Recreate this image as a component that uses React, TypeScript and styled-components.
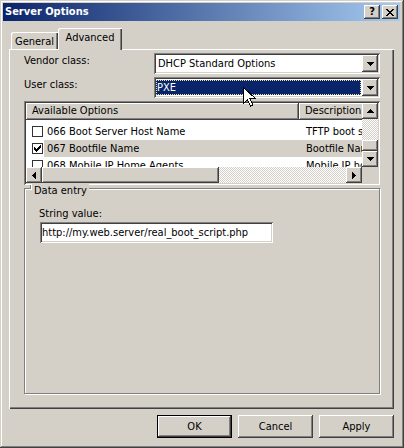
import React from 'react';
import styled, { createGlobalStyle, css } from 'styled-components';

const FACE = '#d4d0c8';
const SHADOW = '#808080';
const DARK = '#404040';
const NAVY = '#0a246a';

const GlobalStyle = createGlobalStyle`
    html, body {
        margin: 0;
        padding: 0;
        background: ${FACE};
    }
    body {
        font-family: 'DejaVu Sans Condensed', 'Liberation Sans', sans-serif;
        font-size: 11px;
        color: #000;
    }
    button, input {
        font: inherit;
    }
`;

// classic 3d bevels
const raised = css`
    background: ${FACE};
    box-shadow: inset -1px -1px ${DARK}, inset 1px 1px #fff, inset -2px -2px ${SHADOW}, inset 2px 2px ${FACE};
`;

const sunken = css`
    box-shadow: inset 1px 1px ${SHADOW}, inset -1px -1px #fff, inset 2px 2px ${DARK}, inset -2px -2px ${FACE};
`;

const dither = css`
    background: repeating-conic-gradient(#fff 0 25%, ${FACE} 0 50%) 0 0 / 2px 2px;
`;

const Window = styled.div`
    position: relative;
    width: 404px;
    height: 448px;
    box-sizing: border-box;
    padding: 3px 4px 3px 3px;
    background: ${FACE};
    box-shadow: inset -1px -1px ${DARK}, inset 1px 1px ${FACE}, inset -2px -2px ${SHADOW}, inset 2px 2px #fff;
    display: flex;
    flex-direction: column;
    overflow: hidden;
`;

const TitleBar = styled.div`
    height: 18px;
    display: flex;
    align-items: center;
    padding: 0 2px 0 2px;
    background: linear-gradient(to right, ${NAVY}, #a6caf0);
`;

const Title = styled.div`
    flex: 1;
    color: #fff;
    font-weight: bold;
    font-size: 11px;
    line-height: 14px;
    white-space: nowrap;
`;

const CaptionButton = styled.div`
    ${raised};
    width: 16px;
    height: 14px;
    margin-left: 2px;
    display: flex;
    align-items: center;
    justify-content: center;
    font-weight: bold;
    font-size: 11px;
    line-height: 12px;
    box-sizing: border-box;
`;

const Body = styled.div`
    flex: 1;
    display: flex;
    flex-direction: column;
    padding: 7px 6px 0 6px;
`;

const TabStrip = styled.div`
    height: 21px;
    display: flex;
    align-items: flex-end;
    padding-left: 2px;
`;

const Tab = styled.div<{ active?: boolean; w: number }>`
    position: relative;
    z-index: ${p => (p.active ? 1 : 0)};
    width: ${p => p.w}px;
    height: ${p => (p.active ? 22 : 17)}px;
    margin-bottom: ${p => (p.active ? -1 : 0)}px;
    box-sizing: border-box;
    background: ${FACE};
    border-top-left-radius: 2px;
    box-shadow: inset 1px 1px #fff, inset -1px 0 ${DARK}, inset -2px 0 ${SHADOW};
    display: flex;
    align-items: ${p => (p.active ? 'flex-start' : 'center')};
    justify-content: center;
    padding-top: ${p => (p.active ? 3 : 1)}px;
    line-height: 13px;
`;

const Panel = styled.div`
    height: 360px;
    box-sizing: border-box;
    padding: 4px 14px 0 15px;
    box-shadow: inset 1px 1px #fff, inset -1px -1px ${DARK}, inset -2px -2px ${SHADOW};
    display: flex;
    flex-direction: column;
`;

const FieldRow = styled.div<{ gap?: number }>`
    display: grid;
    grid-template-columns: 130px 226px;
    height: 21px;
    margin-top: ${p => p.gap ?? 0}px;
`;

const Label = styled.div`
    line-height: 13px;
    margin-top: 1px;
    white-space: nowrap;
`;

const Combo = styled.div`
    ${sunken};
    background: #fff;
    box-sizing: border-box;
    padding: 2px;
    display: flex;
`;

const ComboValue = styled.div<{ focused?: boolean }>`
    flex: 1;
    display: flex;
    align-items: center;
    padding-left: 2px;
    line-height: 13px;
    white-space: nowrap;
    ${p =>
        p.focused &&
        css`
            margin: 1px 1px 1px 0;
            padding-left: 1px;
            background: ${NAVY};
            color: #fff;
            outline: 1px dotted #e8e4a8;
            outline-offset: -1px;
        `}
`;

const ArrowButton = styled.div<{ h?: number }>`
    ${raised};
    width: 16px;
    height: ${p => p.h ?? 16}px;
    flex: none;
    display: flex;
    align-items: center;
    justify-content: center;
`;

const ListView = styled.div`
    ${sunken};
    margin-top: 3px;
    height: 84px;
    box-sizing: border-box;
    padding: 2px;
    background: #fff;
    display: grid;
    grid-template-columns: 1fr 16px;
    grid-template-rows: 1fr 16px;
`;

const ListPane = styled.div`
    overflow: hidden;
    min-width: 0;
`;

const HeaderRow = styled.div`
    display: grid;
    grid-template-columns: 273px 90px;
    height: 17px;
`;

const HeaderCell = styled.div`
    ${raised};
    padding-left: 6px;
    line-height: 16px;
    white-space: nowrap;
`;

const Rows = styled.div`
    padding-top: 3px;
`;

const Row = styled.div`
    display: grid;
    grid-template-columns: 273px 90px;
    height: 17px;
`;

const OptionCell = styled.div`
    display: flex;
    align-items: center;
    padding-left: 6px;
`;

const CheckBox = styled.div`
    width: 11px;
    height: 11px;
    box-sizing: border-box;
    border: 1px solid #333;
    background: #fff;
    flex: none;
    display: flex;
    align-items: center;
    justify-content: center;
`;

const OptionText = styled.div<{ selected?: boolean }>`
    flex: 1;
    align-self: stretch;
    margin-left: 1px;
    padding-left: 3px;
    display: flex;
    align-items: center;
    white-space: nowrap;
    background: ${p => (p.selected ? FACE : 'transparent')};
`;

const DescCell = styled.div<{ selected?: boolean }>`
    display: flex;
    align-items: center;
    padding-left: 7px;
    white-space: nowrap;
    background: ${p => (p.selected ? FACE : 'transparent')};
`;

const VScroll = styled.div`
    display: flex;
    flex-direction: column;
`;

const HScroll = styled.div`
    display: flex;
`;

const Track = styled.div`
    ${dither};
    flex: 1;
`;

const Thumb = styled.div<{ len: number; vertical?: boolean }>`
    ${raised};
    flex: none;
    ${p => (p.vertical ? `height: ${p.len}px;` : `width: ${p.len}px;`)}
`;

const Corner = styled.div`
    background: ${FACE};
`;

const GroupBox = styled.div`
    position: relative;
    margin-top: 3px;
    width: 356px;
    height: 206px;
    box-sizing: border-box;
    border: 1px solid ${SHADOW};
    box-shadow: inset 1px 1px #fff, 1px 1px #fff;
    padding: 17px 0 0 14px;
`;

const Legend = styled.div`
    position: absolute;
    top: -5px;
    left: 7px;
    padding: 0 2px 0 2px;
    background: ${FACE};
    line-height: 13px;
    white-space: nowrap;

    &::before {
        content: '';
        position: absolute;
        left: -2px;
        top: 1px;
        width: 1px;
        height: 4px;
        background: ${SHADOW};
        box-shadow: 1px 0 #fff;
    }
`;

const TextBox = styled.div`
    ${sunken};
    margin: 2px 0 0 1px;
    width: 233px;
    height: 21px;
    box-sizing: border-box;
    background: #fff;
    padding: 0 2px;
    display: flex;
    align-items: center;
    white-space: nowrap;
    overflow: hidden;
`;

const ButtonRow = styled.div`
    display: flex;
    justify-content: flex-end;
    gap: 6px;
    margin-top: 6px;
`;

const PushButton = styled.div<{ isDefault?: boolean }>`
    width: 75px;
    height: 23px;
    box-sizing: border-box;
    background: ${FACE};
    display: flex;
    align-items: center;
    justify-content: center;
    padding-bottom: 1px;
    box-shadow: ${p =>
        p.isDefault
            ? `inset 0 0 0 1px #000, inset -2px -2px ${DARK}, inset 2px 2px #fff, inset -3px -3px ${SHADOW}`
            : `inset -1px -1px ${DARK}, inset 1px 1px #fff, inset -2px -2px ${SHADOW}`};
`;

const Pointer = styled.svg`
    position: absolute;
    left: 243px;
    top: 87px;
`;

type Dir = 'up' | 'down' | 'left' | 'right';

const Triangle = ({ dir }: { dir: Dir }) => {
    const pts: Record<Dir, string> = {
        up: '3.5,0 7,4 0,4',
        down: '0,0 7,0 3.5,4',
        left: '4,0 4,7 0,3.5',
        right: '0,0 4,3.5 0,7',
    };
    const vertical = dir === 'up' || dir === 'down';
    return (
        <svg width={vertical ? 7 : 4} height={vertical ? 4 : 7} shapeRendering="crispEdges">
            <polygon points={pts[dir]} fill="#000" />
        </svg>
    );
};

const options = [
    { name: '066 Boot Server Host Name', desc: 'TFTP boot server host name', checked: false },
    { name: '067 Bootfile Name', desc: 'Bootfile Name', checked: true, selected: true },
    { name: '068 Mobile IP Home Agents', desc: 'Mobile IP home agents list', checked: false },
];

const App = () => (
    <>
        <GlobalStyle />
        <Window>
            <TitleBar>
                <Title>Server Options</Title>
                <CaptionButton>?</CaptionButton>
                <CaptionButton>
                    <svg width="8" height="7" shapeRendering="crispEdges">
                        <path d="M0 0h2l2 2.5 2-2.5h2l-3 3.5 3 3.5h-2l-2-2.5-2 2.5h-2l3-3.5z" fill="#000" />
                    </svg>
                </CaptionButton>
            </TitleBar>
            <Body>
                <TabStrip>
                    <Tab w={47}>General</Tab>
                    <Tab w={64} active>Advanced</Tab>
                </TabStrip>
                <Panel>
                    <FieldRow>
                        <Label>Vendor class:</Label>
                        <Combo>
                            <ComboValue>DHCP Standard Options</ComboValue>
                            <ArrowButton h={17}>
                                <Triangle dir="down" />
                            </ArrowButton>
                        </Combo>
                    </FieldRow>
                    <FieldRow gap={3}>
                        <Label>User class:</Label>
                        <Combo>
                            <ComboValue focused>PXE</ComboValue>
                            <ArrowButton h={17}>
                                <Triangle dir="down" />
                            </ArrowButton>
                        </Combo>
                    </FieldRow>
                    <ListView>
                        <ListPane>
                            <HeaderRow>
                                <HeaderCell>Available Options</HeaderCell>
                                <HeaderCell>Description</HeaderCell>
                            </HeaderRow>
                            <Rows>
                                {options.map(o => (
                                    <Row key={o.name}>
                                        <OptionCell>
                                            <CheckBox>
                                                {o.checked && (
                                                    <svg width="7" height="7" shapeRendering="crispEdges">
                                                        <path d="M0 2h1v1h1v1h1v-1h1v-1h1v-1h1v-1h1v3h-1v1h-1v1h-1v1h-1v1h-1v-1h-1v-1h-1z" fill="#000" />
                                                    </svg>
                                                )}
                                            </CheckBox>
                                            <OptionText selected={o.selected}>{o.name}</OptionText>
                                        </OptionCell>
                                        <DescCell selected={o.selected}>{o.desc}</DescCell>
                                    </Row>
                                ))}
                            </Rows>
                        </ListPane>
                        <VScroll>
                            <ArrowButton>
                                <Triangle dir="up" />
                            </ArrowButton>
                            <Track />
                            <Thumb vertical len={11} />
                            <ArrowButton>
                                <Triangle dir="down" />
                            </ArrowButton>
                        </VScroll>
                        <HScroll>
                            <ArrowButton>
                                <Triangle dir="left" />
                            </ArrowButton>
                            <Thumb len={177} />
                            <Track />
                            <ArrowButton>
                                <Triangle dir="right" />
                            </ArrowButton>
                        </HScroll>
                        <Corner />
                    </ListView>
                    <GroupBox>
                        <Legend>Data entry</Legend>
                        <Label>String value:</Label>
                        <TextBox>http://my.web.server/real_boot_script.php</TextBox>
                    </GroupBox>
                </Panel>
                <ButtonRow>
                    <PushButton isDefault>OK</PushButton>
                    <PushButton>Cancel</PushButton>
                    <PushButton>Apply</PushButton>
                </ButtonRow>
            </Body>
            <Pointer width="13" height="20" viewBox="0 0 13 20" shapeRendering="crispEdges">
                <path d="M0.5 0.5v16l4-4 3 6.5 2.5-1-3-6.5h5.5z" fill="#fff" stroke="#000" strokeWidth="1" />
            </Pointer>
        </Window>
    </>
);

export default App;
